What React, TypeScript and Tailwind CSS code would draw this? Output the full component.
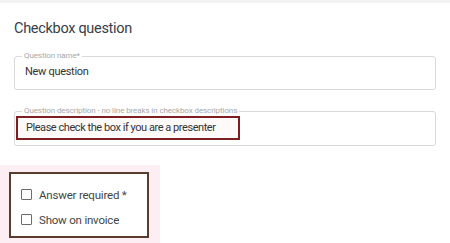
import { useState } from "react";

type CheckRowProps = {
  label: string;
};

const CheckRow = ({ label }: CheckRowProps) => {
  const [checked, setChecked] = useState<boolean>(false);

  return (
    <label className="flex items-center h-[25px] gap-[7px] cursor-pointer">
      <span
        onClick={() => setChecked(!checked)}
        className={`w-[11px] h-[11px] rounded-[1px] border-[1.5px] border-[#6b6b6b] ${checked ? "bg-[#6b6b6b]" : "bg-white"}`}
      />
      <span className="text-[11.5px] leading-[14px] tracking-[-0.2px] text-[#444]">{label}</span>
    </label>
  );
};

export default function App() {
  const fieldStyle = "border border-[#d9d9d9] rounded-[3px] bg-white";
  const legendStyle = "px-[2px] text-[8px] leading-[8px] tracking-[-0.1px] text-[#a8a8a8] whitespace-nowrap";

  return (
    <div className="w-[450px] h-[243px] overflow-hidden bg-white font-['Roboto',sans-serif]">
      <div className="h-[3px] bg-[#f3f3f3]" />

      <div className="px-[14px]">
        <h1 className="mt-[16px] text-[14.5px] leading-[20px] tracking-[-0.3px] text-[#37404a] font-normal">
          Checkbox question
        </h1>

        {/* question name */}
        <fieldset className={`mt-[13px] h-[38px] pl-[10px] ${fieldStyle}`}>
          <legend className={`ml-[-3px] ${legendStyle}`}>Question name*</legend>
          <div className="mt-[5px] text-[11px] leading-[14px] tracking-[-0.3px] text-[#333]">New question</div>
        </fieldset>

        {/* question description */}
        <fieldset className={`mt-[17px] h-[39px] pl-[1px] ${fieldStyle}`}>
          <legend className={`ml-[6px] ${legendStyle}`}>
            Question description - no line breaks in checkbox descriptions
          </legend>
          <div className="mt-[1px] w-[224px] h-[24px] flex items-center pl-[8px] border-2 border-[#7d1f22] bg-[#fffafa] whitespace-nowrap text-[11px] leading-[14px] tracking-[-0.45px] text-[#333]">
            Please check the box if you are a presenter
          </div>
        </fieldset>
      </div>

      {/* options */}
      <div className="mt-[19px] w-[160px] h-[80px] bg-[#fdeef4] pt-[7px] pl-[9px]">
        <div className="w-[140px] h-[66px] border-2 border-[#5b3b2c] bg-white pl-[10px] pt-[8px]">
          <CheckRow label="Answer required *" />
          <CheckRow label="Show on invoice" />
        </div>
      </div>
    </div>
  );
}
